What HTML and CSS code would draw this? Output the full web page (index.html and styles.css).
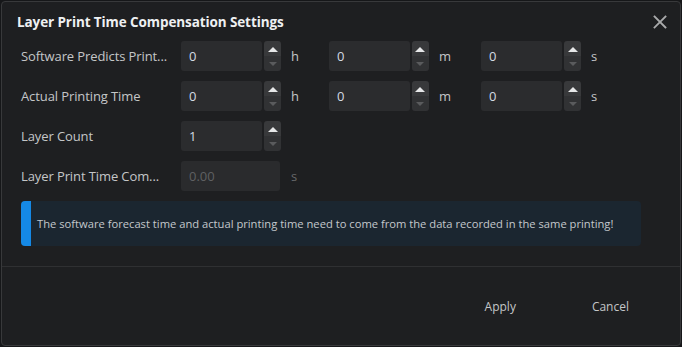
FILE: index.html
```html
<!DOCTYPE html>
<html>
<head>
<meta charset="utf-8">
<link rel="stylesheet" href="styles.css">
</head>
<body>
<div class="dialog">
  <div class="header">
    <div class="title">Layer Print Time Compensation Settings</div>
    <svg class="close" width="14" height="14" viewBox="0 0 14 14"><path d="M1.5 1.5 L12.5 12.5 M12.5 1.5 L1.5 12.5" stroke="#a9aaab" stroke-width="1.8" stroke-linecap="square"/></svg>
  </div>
  <div class="form">
    <div class="row">
      <div class="label">Software Predicts Print...</div>
      <div class="spin"><div class="field">0</div><div class="arrows"><div class="up"><span class="tri-up"></span></div><div class="down"><span class="tri-down"></span></div></div></div>
      <div class="unit">h</div>
      <div class="spin"><div class="field">0</div><div class="arrows"><div class="up"><span class="tri-up"></span></div><div class="down"><span class="tri-down"></span></div></div></div>
      <div class="unit">m</div>
      <div class="spin"><div class="field">0</div><div class="arrows"><div class="up"><span class="tri-up"></span></div><div class="down"><span class="tri-down"></span></div></div></div>
      <div class="unit">s</div>
    </div>
    <div class="row">
      <div class="label">Actual Printing Time</div>
      <div class="spin"><div class="field">0</div><div class="arrows"><div class="up"><span class="tri-up"></span></div><div class="down"><span class="tri-down"></span></div></div></div>
      <div class="unit">h</div>
      <div class="spin"><div class="field">0</div><div class="arrows"><div class="up"><span class="tri-up"></span></div><div class="down"><span class="tri-down"></span></div></div></div>
      <div class="unit">m</div>
      <div class="spin"><div class="field">0</div><div class="arrows"><div class="up"><span class="tri-up"></span></div><div class="down"><span class="tri-down"></span></div></div></div>
      <div class="unit">s</div>
    </div>
    <div class="row">
      <div class="label">Layer Count</div>
      <div class="spin"><div class="field">1</div><div class="arrows"><div class="up"><span class="tri-up"></span></div><div class="down"><span class="tri-down"></span></div></div></div>
    </div>
    <div class="row">
      <div class="label">Layer Print Time Com...</div>
      <div class="field disabled">0.00</div>
      <div class="unit dim">s</div>
    </div>
    <div class="notice">
      <div class="bar"></div>
      <div class="notice-text">The software forecast time and actual printing time need to come from the data recorded in the same printing!</div>
    </div>
  </div>
  <div class="footer">
    <div class="btn apply">Apply</div>
    <div class="btn cancel">Cancel</div>
  </div>
</div>
</body>
</html>
```

FILE: styles.css
```css
html, body {
  margin: 0;
  padding: 0;
  background: #161719;
}
body {
  padding: 1px;
  width: 680px;
  height: 345px;
  box-sizing: content-box;
  font-family: "Open Sans", "Noto Sans", sans-serif;
}
.dialog {
  box-sizing: border-box;
  width: 680px;
  height: 345px;
  background: #1e1f21;
  border: 1px solid #38393b;
  border-radius: 4px;
  display: flex;
  flex-direction: column;
}
.header {
  display: flex;
  align-items: center;
  justify-content: space-between;
  height: 38px;
  padding: 0 13px 0 15px;
}
.title {
  color: #eef0f2;
  font-weight: 700;
  font-size: 13.5px;
  letter-spacing: -0.1px;
  padding-top: 2px;
}
.close {
  display: block;
  margin-top: 1px;
}
.form {
  padding: 1px 0 0 19px;
  display: flex;
  flex-direction: column;
  gap: 10px;
}
.row {
  display: flex;
  align-items: center;
  height: 30px;
}
.label {
  width: 160px;
  color: #c4c6c8;
  font-size: 13px;
  white-space: nowrap;
  letter-spacing: -0.1px;
}
.spin {
  display: flex;
  gap: 2px;
  height: 30px;
}
.field {
  box-sizing: border-box;
  width: 81px;
  height: 30px;
  background: #2b2c2e;
  border-radius: 3px;
  color: #d3dbe3;
  font-size: 13px;
  line-height: 30px;
  padding-left: 8px;
}
.field.disabled {
  width: 99px;
  background: #2a2b2d;
  color: #5f6062;
}
.arrows {
  width: 17px;
  height: 30px;
  border-radius: 3px;
  overflow: hidden;
  display: flex;
  flex-direction: column;
}
.up {
  height: 15px;
  background: #38393b;
  display: flex;
  align-items: center;
  justify-content: center;
}
.down {
  height: 15px;
  background: #313234;
  display: flex;
  align-items: center;
  justify-content: center;
}
.tri-up {
  width: 0;
  height: 0;
  border-left: 5px solid transparent;
  border-right: 5px solid transparent;
  border-bottom: 5px solid #e6e7e8;
  margin-top: 1px;
}
.tri-down {
  width: 0;
  height: 0;
  border-left: 4px solid transparent;
  border-right: 4px solid transparent;
  border-top: 4px solid #5a5b5d;
  margin-top: 1px;
}
.unit {
  color: #c4c6c8;
  font-size: 13px;
  margin-left: 10px;
  margin-right: 30px;
}
.unit.dim {
  color: #67686a;
  margin-left: 11px;
}
.notice {
  width: 620px;
  height: 45px;
  background: #1b2630;
  border-radius: 4px;
  overflow: hidden;
  display: flex;
  align-items: center;
}
.bar {
  width: 10px;
  align-self: stretch;
  background: #1589e6;
}
.notice-text {
  margin-left: 6px;
  color: #c4c8cc;
  font-size: 11.2px;
  white-space: nowrap;
}
.footer {
  margin-top: 20px;
  border-top: 1px solid #2f3032;
  flex: 1;
  display: flex;
  align-items: center;
  justify-content: flex-end;
  padding-right: 51px;
}
.btn {
  color: #c4c6c8;
  font-size: 12px;
}
.apply {
  margin-right: 76px;
}
```
